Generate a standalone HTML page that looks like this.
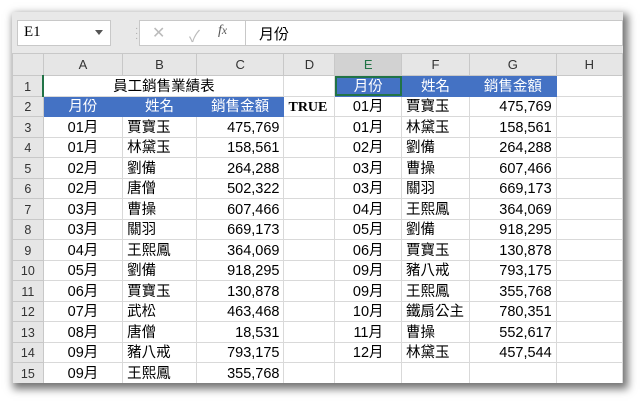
<!DOCTYPE html><html><head><meta charset="utf-8"><style>
body{margin:0;width:642px;height:402px;background:#fff;position:relative;overflow:hidden;font-family:"Liberation Sans","Noto Sans CJK TC",sans-serif}
.win{position:absolute;left:12px;top:12px;width:611px;height:371px;background:#fff;box-shadow:3px 4px 8px 2px rgba(0,0,0,.55);overflow:hidden}
.fb{position:absolute;left:0;top:0;width:611px;height:41px;background:#e8e8e8}
.box{position:absolute;background:#fff;border:1px solid #c8c8c8;top:8px;height:24px}
.g{position:absolute;left:0;top:41px}
table{border-collapse:collapse;table-layout:fixed}
tr{height:20.5px}
td{border:1px solid #d9d9d9;padding:0 4px;font-size:14.5px;line-height:17px;white-space:nowrap;overflow:hidden;color:#000;vertical-align:bottom}
tr.h{height:22px}
tr.h td{background:#e6e6e6;border-color:#c8c8c8;text-align:center;font-size:13px;color:#333;vertical-align:middle}
td.rh{background:#e6e6e6;border-color:#c8c8c8;text-align:center;font-size:12.5px;color:#333;padding:0}
.c{text-align:center}.r{text-align:right}
.b{background:#4472c4;color:#fff;text-align:center;border-color:#4472c4}
</style></head><body><div class="win">
<div class="fb">
<div class="box" style="left:5px;width:92px"><span style="position:absolute;left:6px;top:3px;font-family:'Liberation Serif',serif;font-size:15px">E1</span><span style="position:absolute;right:7px;top:9px;border:4px solid transparent;border-top:5px solid #555"></span></div>
<div style="position:absolute;left:123px;top:14px;color:#aaa;font-size:10px;line-height:5px">·<br>·<br>·</div>
<div class="box" style="left:127px;width:112px;color:#bbb;font-size:16px"><span style="position:absolute;left:12px;top:2px">✕</span><span style="position:absolute;left:49px;top:2px">✓</span><span style="position:absolute;left:78px;top:2px;color:#555;font-style:italic;font-family:'Liberation Serif',serif;font-size:14px">f<small>x</small></span></div>
<div class="box" style="left:233px;width:376px"><span style="position:absolute;left:13px;top:2px;font-size:15px">月份</span></div>
</div>
<div class="g"><table>
<colgroup><col style="width:31px"><col style="width:80px"><col style="width:74px"><col style="width:88px"><col style="width:51px"><col style="width:67px"><col style="width:68px"><col style="width:87px"><col style="width:67px"></colgroup>
<tr class="h"><td></td><td>A</td><td>B</td><td>C</td><td>D</td><td style="background:#d2d2d2;color:#217346">E</td><td>F</td><td>G</td><td>H</td></tr>
<tr><td class="rh" style="border-right:2px solid #217346">1</td><td colspan="3" class="c">員工銷售業績表</td><td></td><td class="b" style="outline:2px solid #217346;outline-offset:-2px">月份</td><td class="b">姓名</td><td class="b">銷售金額</td><td></td></tr>
<tr><td class="rh">2</td><td class="b">月份</td><td class="b">姓名</td><td class="b">銷售金額</td><td style="font-family:'Liberation Serif',serif;font-weight:bold;font-size:14px">TRUE</td><td class="c">01月</td><td>賈寶玉</td><td class="r">475,769</td><td></td></tr>
<tr><td class="rh">3</td><td class="c">01月</td><td>賈寶玉</td><td class="r">475,769</td><td></td><td class="c">01月</td><td>林黛玉</td><td class="r">158,561</td><td></td></tr>
<tr><td class="rh">4</td><td class="c">01月</td><td>林黛玉</td><td class="r">158,561</td><td></td><td class="c">02月</td><td>劉備</td><td class="r">264,288</td><td></td></tr>
<tr><td class="rh">5</td><td class="c">02月</td><td>劉備</td><td class="r">264,288</td><td></td><td class="c">03月</td><td>曹操</td><td class="r">607,466</td><td></td></tr>
<tr><td class="rh">6</td><td class="c">02月</td><td>唐僧</td><td class="r">502,322</td><td></td><td class="c">03月</td><td>關羽</td><td class="r">669,173</td><td></td></tr>
<tr><td class="rh">7</td><td class="c">03月</td><td>曹操</td><td class="r">607,466</td><td></td><td class="c">04月</td><td>王熙鳳</td><td class="r">364,069</td><td></td></tr>
<tr><td class="rh">8</td><td class="c">03月</td><td>關羽</td><td class="r">669,173</td><td></td><td class="c">05月</td><td>劉備</td><td class="r">918,295</td><td></td></tr>
<tr><td class="rh">9</td><td class="c">04月</td><td>王熙鳳</td><td class="r">364,069</td><td></td><td class="c">06月</td><td>賈寶玉</td><td class="r">130,878</td><td></td></tr>
<tr><td class="rh">10</td><td class="c">05月</td><td>劉備</td><td class="r">918,295</td><td></td><td class="c">09月</td><td>豬八戒</td><td class="r">793,175</td><td></td></tr>
<tr><td class="rh">11</td><td class="c">06月</td><td>賈寶玉</td><td class="r">130,878</td><td></td><td class="c">09月</td><td>王熙鳳</td><td class="r">355,768</td><td></td></tr>
<tr><td class="rh">12</td><td class="c">07月</td><td>武松</td><td class="r">463,468</td><td></td><td class="c">10月</td><td>鐵扇公主</td><td class="r">780,351</td><td></td></tr>
<tr><td class="rh">13</td><td class="c">08月</td><td>唐僧</td><td class="r">18,531</td><td></td><td class="c">11月</td><td>曹操</td><td class="r">552,617</td><td></td></tr>
<tr><td class="rh">14</td><td class="c">09月</td><td>豬八戒</td><td class="r">793,175</td><td></td><td class="c">12月</td><td>林黛玉</td><td class="r">457,544</td><td></td></tr>
<tr><td class="rh">15</td><td class="c">09月</td><td>王熙鳳</td><td class="r">355,768</td><td></td><td></td><td></td><td></td><td></td></tr>
</table></div>
</div></body></html>
